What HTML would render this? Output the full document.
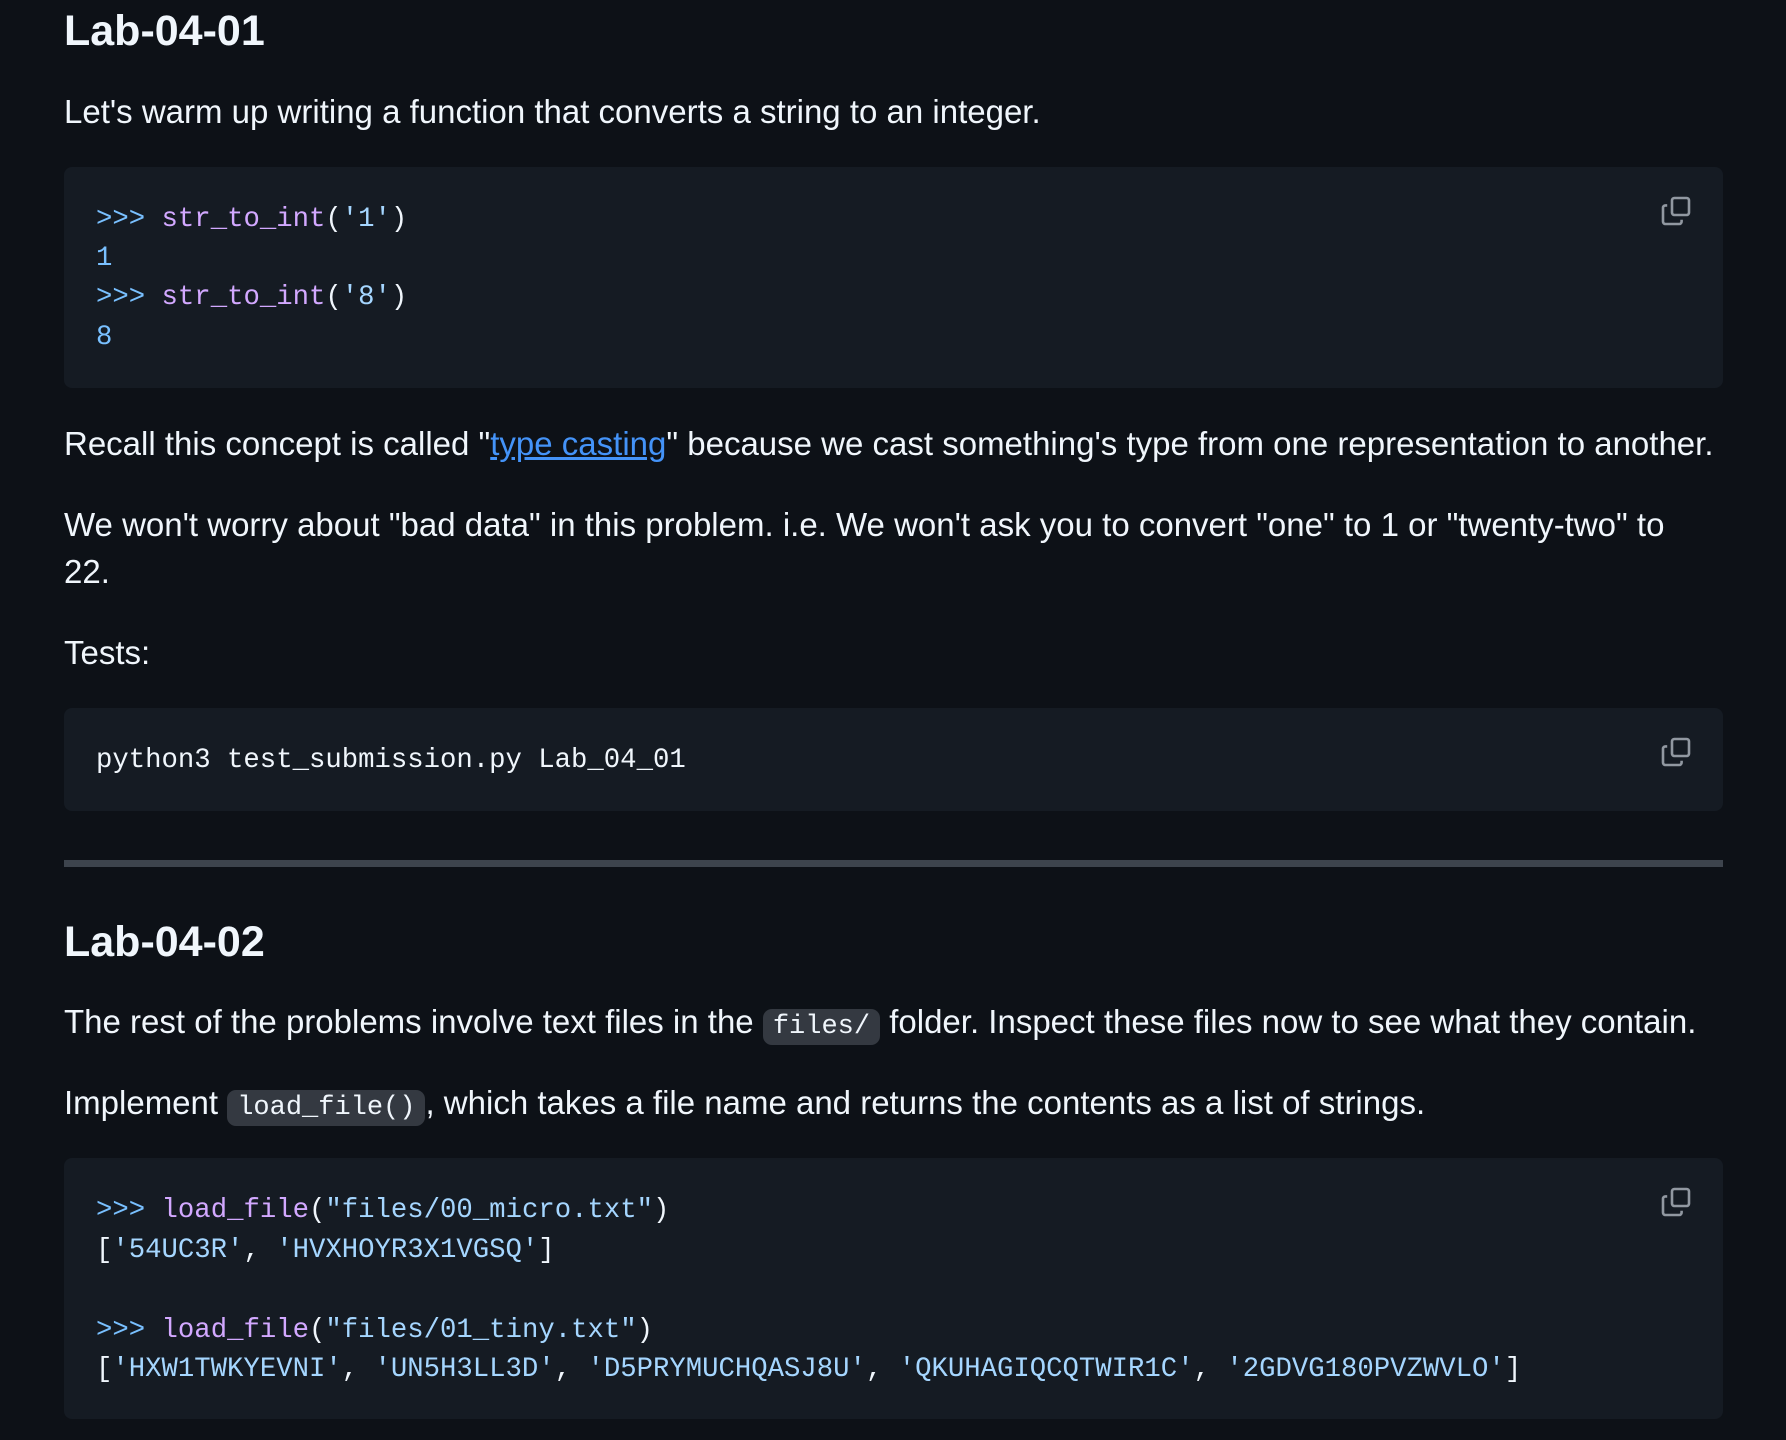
<!DOCTYPE html>
<html><head><meta charset="utf-8"><style>
html,body{margin:0;padding:0;background:#0d1117;width:1786px;height:1440px;overflow:hidden}
body{position:relative;font-family:"Liberation Sans",sans-serif;color:#f0f6fc}
.t{position:absolute;left:64px;white-space:nowrap;font-size:33px;line-height:40px}
.h{position:absolute;left:64px;font-weight:bold;font-size:43px;line-height:50px;white-space:nowrap}
.cb{position:absolute;left:64px;width:1659px;background:#151b23;border-radius:8px}
.m{position:absolute;left:96px;font-family:"Liberation Mono",monospace;font-size:27.3px;line-height:40px;white-space:pre;color:#f0f6fc}
.p{color:#79c0ff}.f{color:#d2a8ff}.s{color:#a5d6ff}
.ic{position:absolute;left:1660px;width:32px;height:32px}
.ic{fill:none;stroke:#9198a1;stroke-width:1.3}
code{font-family:"Liberation Mono",monospace;font-size:27px;background:#343941;border-radius:9px;padding:3px 10px}
a{color:#4493f8;text-decoration:underline}
</style></head><body>
<div class="h" style="top:6px">Lab-04-01</div>
<div class="t" style="top:92px">Let's warm up writing a function that converts a string to an integer.</div>
<div class="cb" style="top:167px;height:221px"></div>
<div class="m" style="top:200px"><span class="p">&gt;&gt;&gt;</span> <span class="f">str_to_int</span>(<span class="s">'1'</span>)</div>
<div class="m p" style="top:239px">1</div>
<div class="m" style="top:278px"><span class="p">&gt;&gt;&gt;</span> <span class="f">str_to_int</span>(<span class="s">'8'</span>)</div>
<div class="m p" style="top:318px">8</div>
<svg class="ic" style="top:195px" viewBox="0 0 16 16"><rect x="6" y="1.5" width="8.5" height="8.5" rx="1.2"/><path d="M3.6 5.2H2.7a1.2 1.2 0 0 0-1.2 1.2v6.9a1.2 1.2 0 0 0 1.2 1.2h6.9a1.2 1.2 0 0 0 1.2-1.2v-.9"/></svg>
<div class="t" style="top:424px">Recall this concept is called "<a>type casting</a>" because we cast something's type from one representation to another.</div>
<div class="t" style="top:505px">We won't worry about "bad data" in this problem. i.e. We won't ask you to convert "one" to 1 or "twenty-two" to</div>
<div class="t" style="top:552px">22.</div>
<div class="t" style="top:633px">Tests:</div>
<div class="cb" style="top:708px;height:103px"></div>
<div class="m" style="top:741px">python3 test_submission.py Lab_04_01</div>
<svg class="ic" style="top:736px" viewBox="0 0 16 16"><rect x="6" y="1.5" width="8.5" height="8.5" rx="1.2"/><path d="M3.6 5.2H2.7a1.2 1.2 0 0 0-1.2 1.2v6.9a1.2 1.2 0 0 0 1.2 1.2h6.9a1.2 1.2 0 0 0 1.2-1.2v-.9"/></svg>
<div style="position:absolute;left:64px;top:860px;width:1659px;height:7px;background:#3d444d"></div>
<div class="h" style="top:917px">Lab-04-02</div>
<div class="t" style="top:1002px">The rest of the problems involve text files in the <code>files/</code> folder. Inspect these files now to see what they contain.</div>
<div class="t" style="top:1083px">Implement <code>load_file()</code>, which takes a file name and returns the contents as a list of strings.</div>
<div class="cb" style="top:1158px;height:261px"></div>
<div class="m" style="top:1191px"><span class="p">&gt;&gt;&gt;</span> <span class="f">load_file</span>(<span class="s">"files/00_micro.txt"</span>)</div>
<div class="m" style="top:1231px">[<span class="s">'54UC3R'</span>, <span class="s">'HVXHOYR3X1VGSQ'</span>]</div>
<div class="m" style="top:1311px"><span class="p">&gt;&gt;&gt;</span> <span class="f">load_file</span>(<span class="s">"files/01_tiny.txt"</span>)</div>
<div class="m" style="top:1350px">[<span class="s">'HXW1TWKYEVNI'</span>, <span class="s">'UN5H3LL3D'</span>, <span class="s">'D5PRYMUCHQASJ8U'</span>, <span class="s">'QKUHAGIQCQTWIR1C'</span>, <span class="s">'2GDVG180PVZWVLO'</span>]</div>
<svg class="ic" style="top:1186px" viewBox="0 0 16 16"><rect x="6" y="1.5" width="8.5" height="8.5" rx="1.2"/><path d="M3.6 5.2H2.7a1.2 1.2 0 0 0-1.2 1.2v6.9a1.2 1.2 0 0 0 1.2 1.2h6.9a1.2 1.2 0 0 0 1.2-1.2v-.9"/></svg>
</body></html>
